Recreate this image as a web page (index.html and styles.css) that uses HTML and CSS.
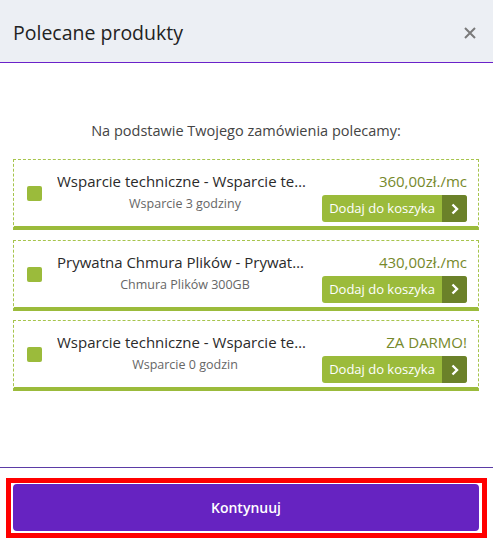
FILE: index.html
```html
<!DOCTYPE html>
<html lang="pl">
<head>
<meta charset="utf-8">
<title>Polecane produkty</title>
<link rel="stylesheet" href="styles.css">
</head>
<body>
<div class="modal">
  <header class="modal-header">
    <h1 class="modal-title">Polecane produkty</h1>
    <button class="close" aria-label="Zamknij">
      <svg width="12" height="12" viewBox="0 0 12 12"><path d="M1 1L11 11M11 1L1 11" stroke="#7a7a7a" stroke-width="2" fill="none"/></svg>
    </button>
  </header>
  <main class="modal-body">
    <p class="intro">Na podstawie Twojego zamówienia polecamy:</p>
    <div class="cards">
      <div class="card">
        <span class="check"></span>
        <div class="info">
          <div class="name">Wsparcie techniczne - Wsparcie techniczne</div>
          <div class="desc">Wsparcie 3 godziny</div>
        </div>
        <div class="side">
          <div class="price">360,00zł./mc</div>
          <button class="add"><span class="add-label">Dodaj do koszyka</span><span class="add-arrow"><svg width="8" height="12" viewBox="0 0 8 12"><path d="M1.5 1.5L6 6L1.5 10.5" stroke="#fff" stroke-width="2.4" fill="none"/></svg></span></button>
        </div>
      </div>
      <div class="card">
        <span class="check"></span>
        <div class="info">
          <div class="name">Prywatna Chmura Plików - Prywatna Chmura Plików</div>
          <div class="desc">Chmura Plików 300GB</div>
        </div>
        <div class="side">
          <div class="price">430,00zł./mc</div>
          <button class="add"><span class="add-label">Dodaj do koszyka</span><span class="add-arrow"><svg width="8" height="12" viewBox="0 0 8 12"><path d="M1.5 1.5L6 6L1.5 10.5" stroke="#fff" stroke-width="2.4" fill="none"/></svg></span></button>
        </div>
      </div>
      <div class="card">
        <span class="check"></span>
        <div class="info">
          <div class="name">Wsparcie techniczne - Wsparcie techniczne</div>
          <div class="desc">Wsparcie 0 godzin</div>
        </div>
        <div class="side">
          <div class="price">ZA DARMO!</div>
          <button class="add"><span class="add-label">Dodaj do koszyka</span><span class="add-arrow"><svg width="8" height="12" viewBox="0 0 8 12"><path d="M1.5 1.5L6 6L1.5 10.5" stroke="#fff" stroke-width="2.4" fill="none"/></svg></span></button>
        </div>
      </div>
    </div>
  </main>
  <footer class="modal-footer">
    <div class="highlight">
      <button class="continue">Kontynuuj</button>
    </div>
  </footer>
</div>
</body>
</html>
```

FILE: styles.css
```css
* { box-sizing: border-box; }
html, body { margin: 0; padding: 0; }
body {
  font-family: "Open Sans", "Noto Sans", sans-serif;
  color: #333;
  background: #fff;
}
.modal {
  width: 493px;
  height: 545px;
  display: flex;
  flex-direction: column;
}
.modal-header {
  height: 63px;
  background: #eceff4;
  border-bottom: 1px solid #6a22c9;
  display: flex;
  align-items: center;
  justify-content: space-between;
  padding: 3px 17px 0 13px;
}
.modal-title {
  margin: 0;
  font-size: 19.5px;
  font-weight: 400;
  color: #222;
  line-height: 26px;
}
.close {
  border: 0;
  background: none;
  padding: 0;
  width: 12px;
  height: 12px;
  display: flex;
}
.modal-body {
  flex: 1;
  padding: 58px 14px 0 13px;
}
.intro {
  margin: 0 0 18px;
  text-align: center;
  font-size: 14.5px;
  line-height: 20px;
  color: #444;
}
.cards {
  display: flex;
  flex-direction: column;
  gap: 9.5px;
}
.card {
  height: 71px;
  border: 1px dashed #a6c44c;
  border-bottom: 4px solid #9bbb3b;
  display: flex;
  align-items: center;
  padding: 0 11px 0 13px;
}
.check {
  width: 15px;
  height: 15px;
  border-radius: 2px;
  background: #9bbb3b;
  flex: none;
  margin-top: 1px;
}
.info {
  flex: 1;
  min-width: 0;
  margin-left: 15px;
  align-self: flex-start;
  padding-top: 11px;
  text-align: center;
}
.name {
  font-size: 15px;
  line-height: 21px;
  color: #2a2a2a;
  white-space: nowrap;
  overflow: hidden;
  text-overflow: ellipsis;
  text-align: left;
}
.desc {
  font-size: 12.5px;
  line-height: 18px;
  color: #666;
  margin-top: 3px;
}
.side {
  flex: none;
  width: 145px;
  margin-left: 9px;
  align-self: flex-start;
  padding-top: 11px;
  display: flex;
  flex-direction: column;
  align-items: flex-end;
}
.price {
  font-size: 15px;
  line-height: 20px;
  color: #76892b;
}
.add {
  margin-top: 4px;
  width: 145px;
  height: 27px;
  border: 0;
  padding: 0;
  border-radius: 3px;
  overflow: hidden;
  background: #9bbb3b;
  display: flex;
  font-family: inherit;
  cursor: pointer;
}
.add-label {
  flex: 1;
  color: #fff;
  font-size: 13px;
  line-height: 27px;
  text-align: center;
}
.add-arrow {
  width: 25px;
  background: #6b8129;
  display: flex;
  align-items: center;
  justify-content: center;
}
.modal-footer {
  border-top: 1px solid #5b3ba6;
  padding: 10px 6px 7px 6px;
}
.highlight {
  border: 5px solid #ff0000;
  padding: 1px 3px 2px 2px;
}
.continue {
  width: 100%;
  height: 47px;
  border: 0;
  border-radius: 4px;
  background: #6623c1;
  color: #fff;
  font-family: inherit;
  font-size: 14px;
  font-weight: 600;
  cursor: pointer;
}
```
